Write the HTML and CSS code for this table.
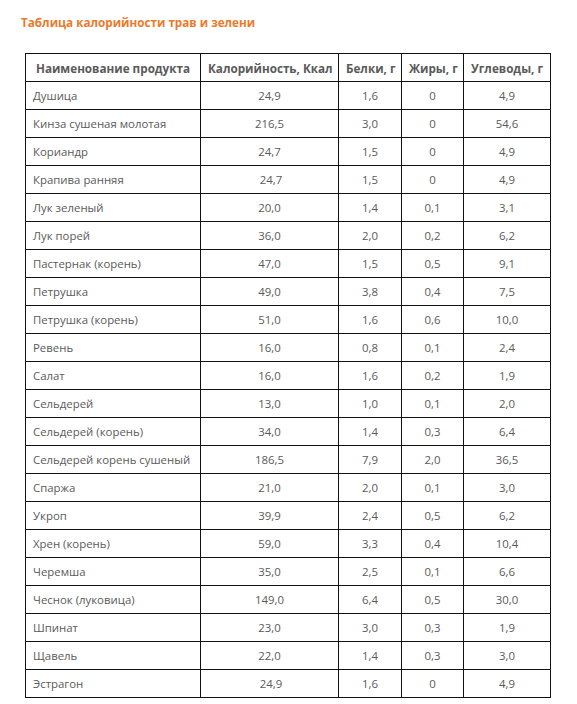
FILE: index.html
```html
<!DOCTYPE html>
<html lang="ru">
<head>
<meta charset="utf-8">
<link rel="stylesheet" href="styles.css">
</head>
<body>
<div class="page">
<h3 class="title">Таблица калорийности трав и зелени</h3>
<table class="cal">
<colgroup>
<col class="c1"><col class="c2"><col class="c3"><col class="c4"><col class="c5">
</colgroup>
<thead>
<tr><th>Наименование продукта</th><th>Калорийность, Ккал</th><th>Белки, г</th><th>Жиры, г</th><th>Углеводы, г</th></tr>
</thead>
<tbody>
<tr><td>Душица</td><td>24,9</td><td>1,6</td><td>0</td><td>4,9</td></tr>
<tr><td>Кинза сушеная молотая</td><td>216,5</td><td>3,0</td><td>0</td><td>54,6</td></tr>
<tr><td>Кориандр</td><td>24,7</td><td>1,5</td><td>0</td><td>4,9</td></tr>
<tr><td>Крапива ранняя</td><td>&nbsp;24,7</td><td>1,5</td><td>0</td><td>4,9</td></tr>
<tr><td>Лук зеленый</td><td>20,0</td><td>1,4</td><td>0,1</td><td>3,1</td></tr>
<tr><td>Лук порей</td><td>36,0</td><td>2,0</td><td>0,2</td><td>6,2</td></tr>
<tr><td>Пастернак (корень)</td><td>47,0</td><td>1,5</td><td>0,5</td><td>9,1</td></tr>
<tr><td>Петрушка</td><td>49,0</td><td>3,8</td><td>0,4</td><td>7,5</td></tr>
<tr><td>Петрушка (корень)</td><td>51,0</td><td>1,6</td><td>0,6</td><td>10,0</td></tr>
<tr><td>Ревень</td><td>16,0</td><td>0,8</td><td>0,1</td><td>2,4</td></tr>
<tr><td>Салат</td><td>16,0</td><td>1,6</td><td>0,2</td><td>1,9</td></tr>
<tr><td>Сельдерей</td><td>13,0</td><td>1,0</td><td>0,1</td><td>2,0</td></tr>
<tr><td>Сельдерей (корень)</td><td>34,0</td><td>1,4</td><td>0,3</td><td>6,4</td></tr>
<tr><td>Сельдерей корень сушеный</td><td>186,5</td><td>7,9</td><td>2,0</td><td>36,5</td></tr>
<tr><td>Спаржа</td><td>21,0</td><td>2,0</td><td>0,1</td><td>3,0</td></tr>
<tr><td>Укроп</td><td>39,9</td><td>2,4</td><td>0,5</td><td>6,2</td></tr>
<tr><td>Хрен (корень)</td><td>59,0</td><td>3,3</td><td>0,4</td><td>10,4</td></tr>
<tr><td>Черемша</td><td>35,0</td><td>2,5</td><td>0,1</td><td>6,6</td></tr>
<tr><td>Чеснок (луковица)</td><td>149,0</td><td>6,4</td><td>0,5</td><td>30,0</td></tr>
<tr><td>Шпинат</td><td>23,0</td><td>3,0</td><td>0,3</td><td>1,9</td></tr>
<tr><td>Щавель</td><td>22,0</td><td>1,4</td><td>0,3</td><td>3,0</td></tr>
<tr><td>Эстрагон</td><td>&nbsp;24,9</td><td>1,6</td><td>0</td><td>4,9</td></tr>
</tbody>
</table>
</div>
</body>
</html>
```
FILE: styles.css
```css
html, body {
  margin: 0;
  padding: 0;
  background: #fff;
}
.page {
  padding: 13px 0 0 21px;
  font-family: "Open Sans", "Liberation Sans", sans-serif;
  color: #5a5a5a;
}
.title {
  margin: 0 0 22px 0;
  font-size: 11.7px;
  line-height: 18px;
  font-weight: 700;
  color: #ec7a2b;
}
.cal {
  margin-left: 4px;
  border-collapse: collapse;
  table-layout: fixed;
  width: 525px;
  font-size: 11.4px;
}
.c1 { width: 175px; }
.c2 { width: 138px; }
.c3 { width: 63px; }
.c4 { width: 62px; }
.c5 { width: 87px; }
.cal th, .cal td {
  border: 1px solid #111;
  height: 27px;
  padding: 0 7px;
  text-align: center;
  vertical-align: middle;
  white-space: nowrap;
  line-height: 16px;
}
.cal th {
  font-weight: 700;
  font-size: 11.7px;
  color: #5a5a5a;
}
.cal td {
  font-weight: 400;
}
.cal td:first-child {
  text-align: left;
}
```
